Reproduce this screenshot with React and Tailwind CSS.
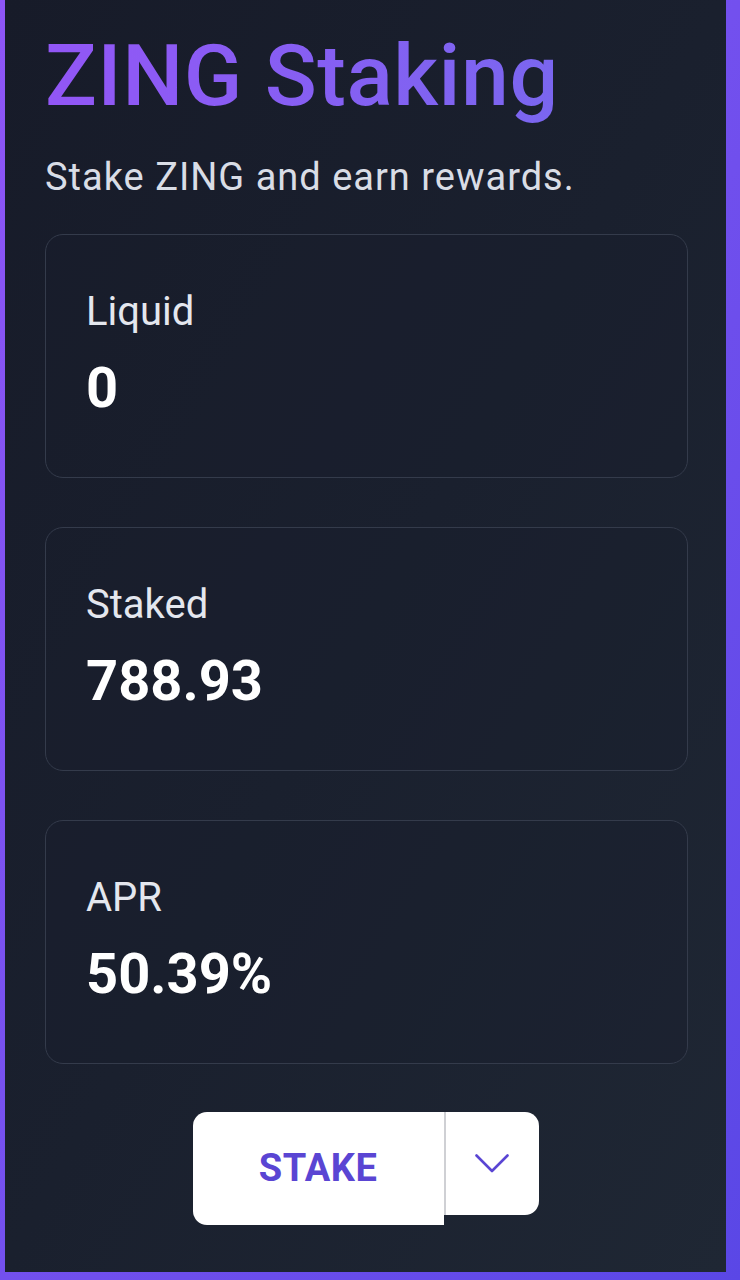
import React from "react";

function StatCard({ label, value }) {
  return (
    <div className="rounded-[18px] border border-[#343b4b] bg-[#1a1f2d]/40 pl-[40px] pr-[40px] pt-[53px] pb-[57px] flex flex-col gap-[20px]">
      <div className="text-[40px] leading-[48px] text-[#e4e7ee] font-normal">{label}</div>
      <div className="text-[56px] leading-[64px] text-white font-bold">{value}</div>
    </div>
  );
}

export default function App() {
  return (
    <div
      className="w-[740px] h-[1280px] bg-gradient-to-br from-[#8e55f6] via-[#7350ee] to-[#5a47e6] pl-[5px] pr-[14px] pb-[8px]"
      style={{ fontFamily: "Roboto, 'Noto Sans', sans-serif" }}
    >
      <div className="h-full bg-gradient-to-br from-[#171b29] via-[#1a202e] to-[#1f2734] pl-[40px] pr-[38px] pt-[26px] flex flex-col">
        <h1 className="text-[86px] leading-[100px] font-medium tracking-[0.5px] bg-gradient-to-r from-[#9256f6] to-[#7a66ef] bg-clip-text text-transparent w-fit">
          ZING Staking
        </h1>
        <p className="mt-[28px] text-[38px] leading-[46px] tracking-[1px] text-[#d9dde6]">
          Stake ZING and earn rewards.
        </p>
        <div className="mt-[34px] flex flex-col gap-[49px]">
          <StatCard label="Liquid" value="0" />
          <StatCard label="Staked" value="788.93" />
          <StatCard label="APR" value="50.39%" />
        </div>
        <div className="mt-[48px] flex justify-center">
          <div className="flex items-start ml-[-2px]">
            <button className="w-[251px] h-[113px] bg-white rounded-l-[14px] flex items-center justify-center text-[38px] font-bold text-[#5a45d3] tracking-[0.5px]">
              STAKE
            </button>
            <button className="w-[95px] h-[103px] bg-white rounded-r-[14px] border-l-2 border-[#cfd0d4] flex items-center justify-center">
              <svg width="34" height="19" viewBox="0 0 34 19" fill="none">
                <path d="M1.5 1.5 L17 17 L32.5 1.5" stroke="#5a45d3" strokeWidth="2.6" strokeLinecap="round" strokeLinejoin="round" />
              </svg>
            </button>
          </div>
        </div>
      </div>
    </div>
  );
}
